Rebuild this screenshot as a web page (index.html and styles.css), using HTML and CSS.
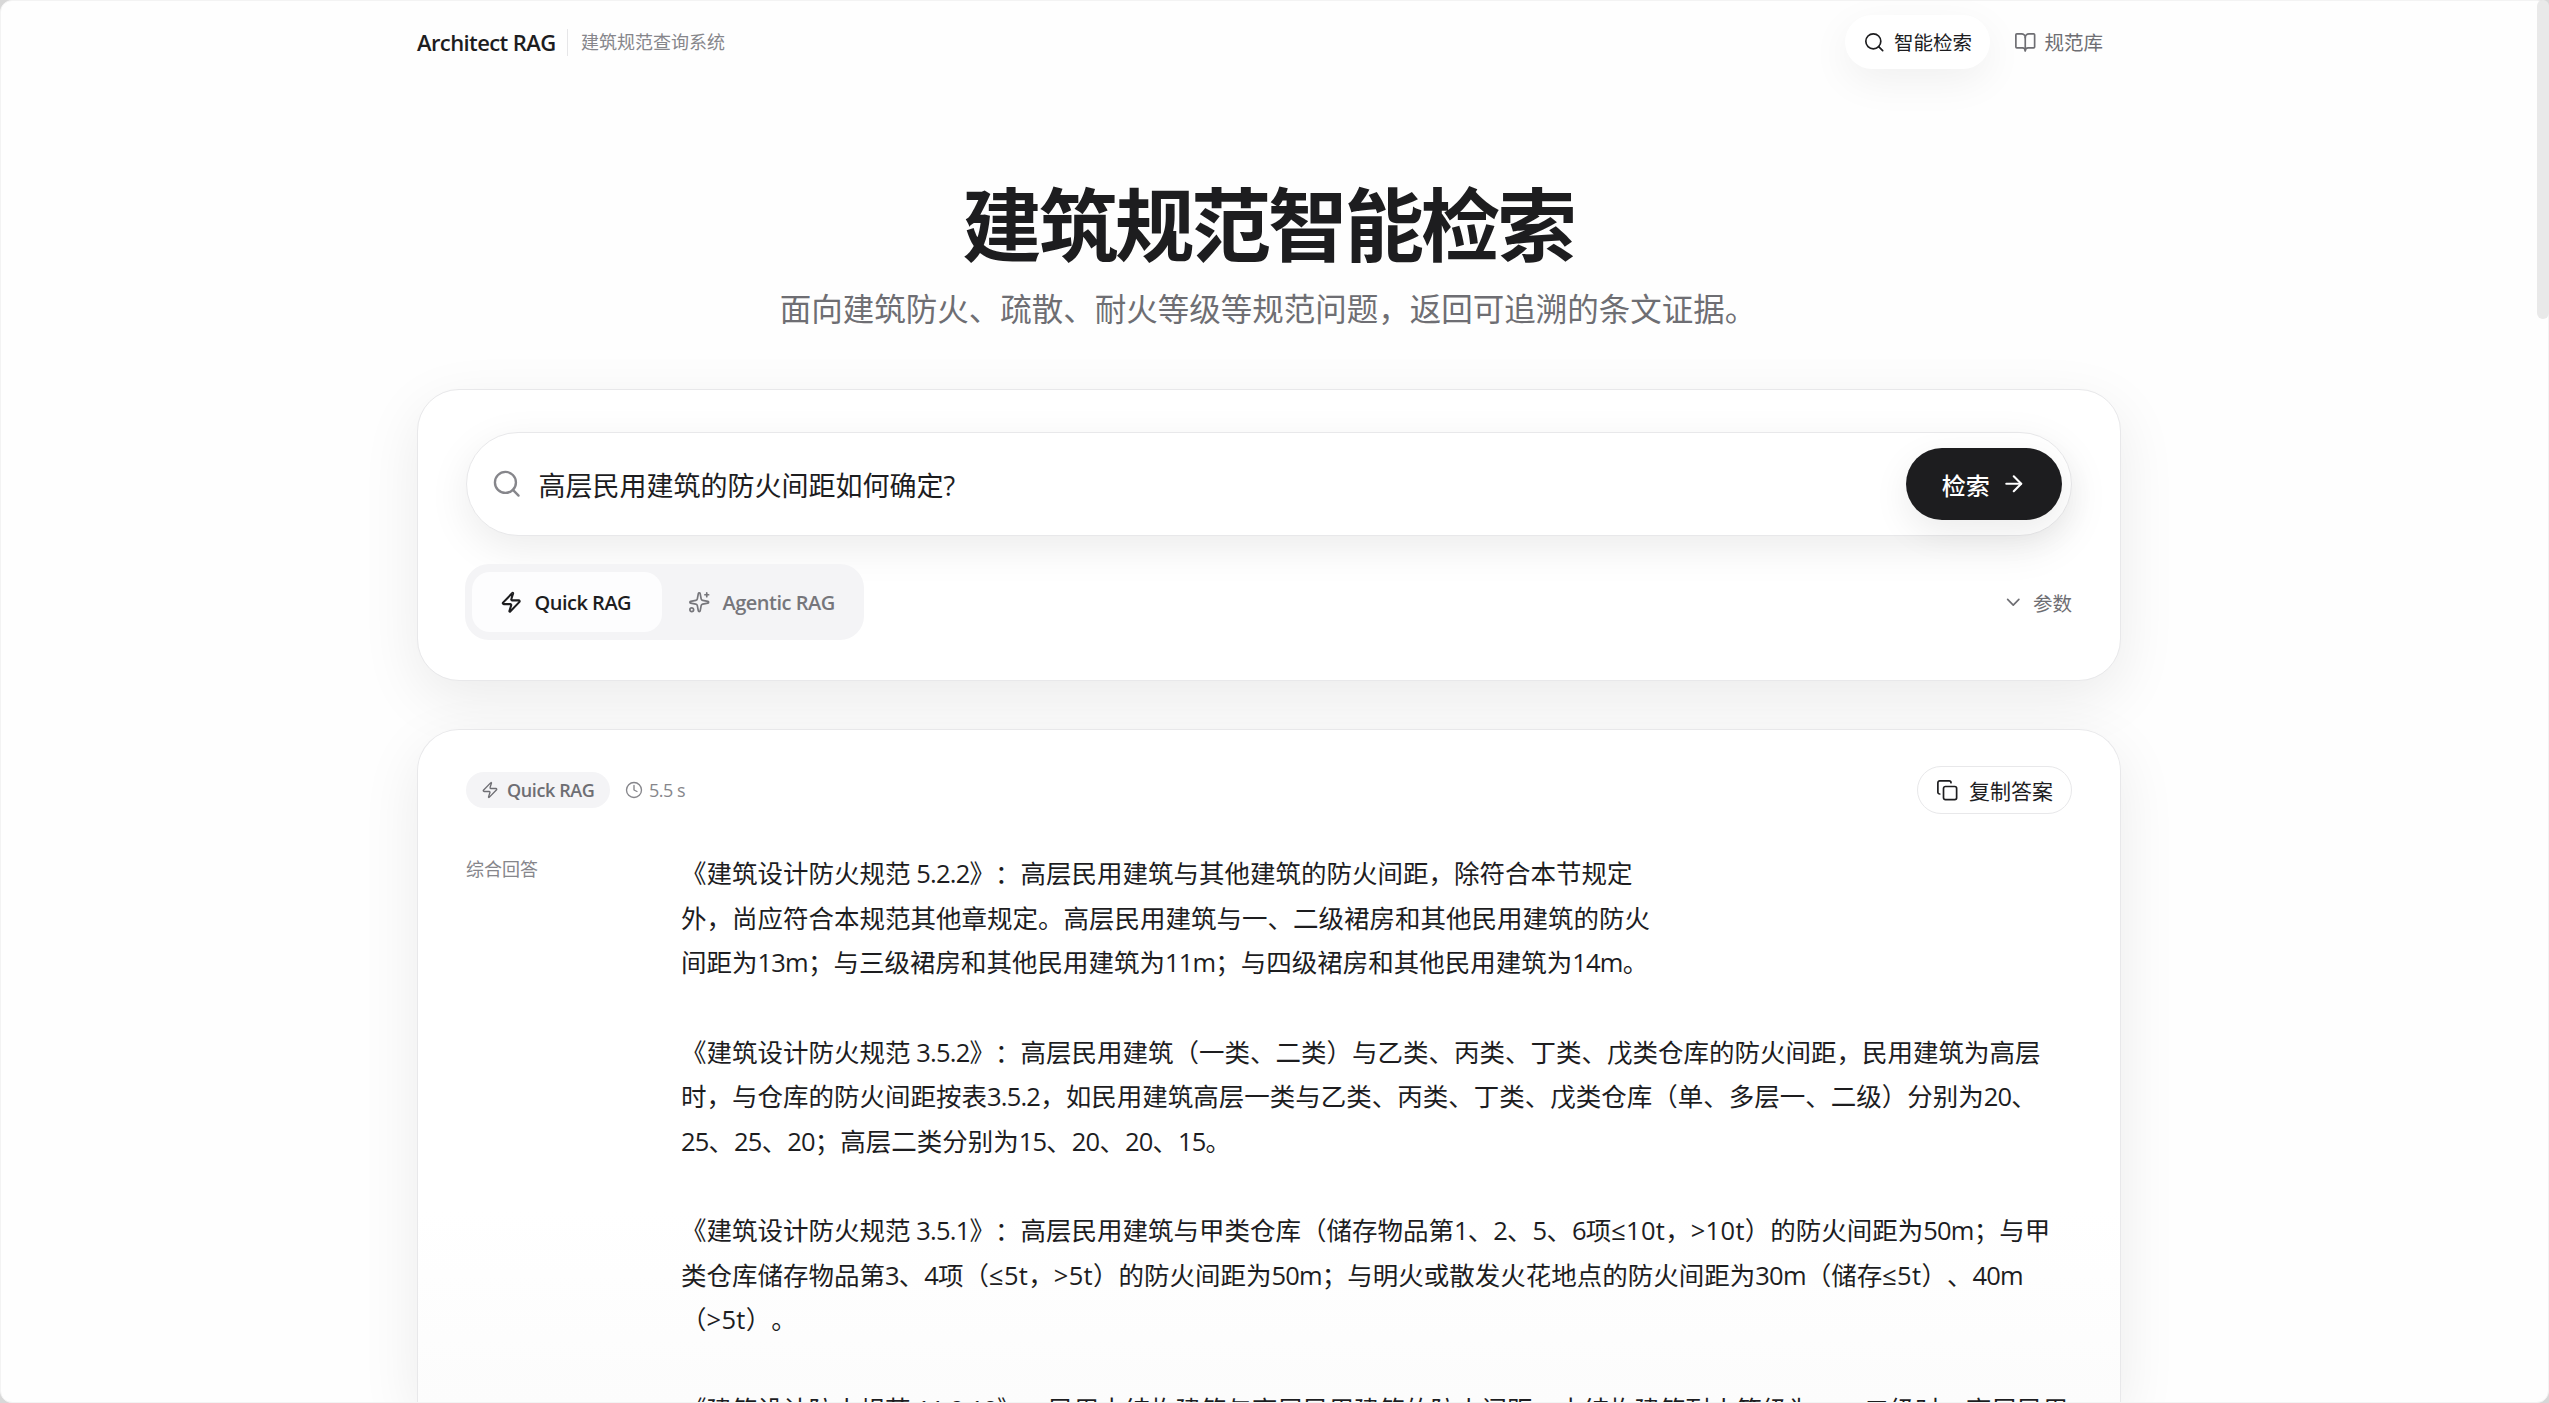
FILE: index.html
```html
<!DOCTYPE html>
<html lang="zh-CN">
<head>
    <meta charset="UTF-8">
    <title>Architect RAG</title>
    <link rel="stylesheet" href="styles.css">
</head>
<body>
    <div class="page">
        <header class="topbar">
            <div class="brand">
                <span class="brand-name">Architect RAG</span>
                <span class="brand-sub">建筑规范查询系统</span>
            </div>
            <nav class="nav">
                <a class="nav-item active">
                    <svg class="icon" viewBox="0 0 24 24"><circle cx="11" cy="11" r="8"/><path d="m21 21-4.3-4.3"/></svg>
                    <span>智能检索</span>
                </a>
                <a class="nav-item">
                    <svg class="icon" viewBox="0 0 24 24"><path d="M12 7v14"/><path d="M3 18a1 1 0 0 1-1-1V4a1 1 0 0 1 1-1h5a4 4 0 0 1 4 4 4 4 0 0 1 4-4h5a1 1 0 0 1 1 1v13a1 1 0 0 1-1 1h-6a3 3 0 0 0-3 3 3 3 0 0 0-3-3z"/></svg>
                    <span>规范库</span>
                </a>
            </nav>
        </header>

        <section class="hero">
            <h1>建筑规范智能检索</h1>
            <p>面向建筑防火、疏散、耐火等级等规范问题，返回可追溯的条文证据。</p>
        </section>

        <section class="card search-card">
            <div class="search-box">
                <svg class="icon search-icon" viewBox="0 0 24 24"><circle cx="11" cy="11" r="8"/><path d="m21 21-4.3-4.3"/></svg>
                <span class="query">高层民用建筑的防火间距如何确定?</span>
                <button class="submit">
                    检索
                    <svg class="icon" viewBox="0 0 24 24"><path d="M5 12h14"/><path d="m12 5 7 7-7 7"/></svg>
                </button>
            </div>
            <div class="options">
                <div class="modes">
                    <div class="mode active">
                        <svg class="icon" viewBox="0 0 24 24"><path d="M4 14a1 1 0 0 1-.78-1.63l9.9-10.2a.5.5 0 0 1 .86.46l-1.92 6.02A1 1 0 0 0 13 10h7a1 1 0 0 1 .78 1.63l-9.9 10.2a.5.5 0 0 1-.86-.46l1.92-6.02A1 1 0 0 0 11 14z"/></svg>
                        <span>Quick RAG</span>
                    </div>
                    <div class="mode">
                        <svg class="icon" viewBox="0 0 24 24"><path d="M11.017 2.814a1 1 0 0 1 1.966 0l1.051 5.558a2 2 0 0 0 1.594 1.594l5.558 1.051a1 1 0 0 1 0 1.966l-5.558 1.051a2 2 0 0 0-1.594 1.594l-1.051 5.558a1 1 0 0 1-1.966 0l-1.051-5.558a2 2 0 0 0-1.594-1.594l-5.558-1.051a1 1 0 0 1 0-1.966l5.558-1.051a2 2 0 0 0 1.594-1.594z"/><path d="M20 2v4"/><path d="M22 4h-4"/><circle cx="4" cy="20" r="2"/></svg>
                        <span>Agentic RAG</span>
                    </div>
                </div>
                <div class="params">
                    <svg class="icon" viewBox="0 0 24 24"><path d="m6 9 6 6 6-6"/></svg>
                    参数
                </div>
            </div>
        </section>

        <section class="card answer-card">
            <div class="answer-head">
                <div class="meta">
                    <span class="badge">
                        <svg class="icon" viewBox="0 0 24 24"><path d="M4 14a1 1 0 0 1-.78-1.63l9.9-10.2a.5.5 0 0 1 .86.46l-1.92 6.02A1 1 0 0 0 13 10h7a1 1 0 0 1 .78 1.63l-9.9 10.2a.5.5 0 0 1-.86-.46l1.92-6.02A1 1 0 0 0 11 14z"/></svg>
                        <span>Quick RAG</span>
                    </span>
                    <span class="time">
                        <svg class="icon" viewBox="0 0 24 24"><circle cx="12" cy="12" r="10"/><path d="M12 6v6l4 2"/></svg>
                        5.5 s
                    </span>
                </div>
                <button class="copy">
                    <svg class="icon" viewBox="0 0 24 24"><rect x="8" y="8" width="14" height="14" rx="2"/><path d="M4 16c-1.1 0-2-.9-2-2V4c0-1.1.9-2 2-2h10c1.1 0 2 .9 2 2"/></svg>
                    <span>复制答案</span>
                </button>
            </div>
            <div class="answer-body">
                <div class="answer-label">综合回答</div>
                <div class="answer-text">
                    <p>《建筑设计防火规范<i> 5.2.2</i>》：高层民用建筑与其他建筑的防火间距，除符合本节规定<br>外，尚应符合本规范其他章规定。高层民用建筑与一、二级裙房和其他民用建筑的防火<br>间距为<i>13m</i>；与三级裙房和其他民用建筑为<i>11m</i>；与四级裙房和其他民用建筑为<i>14m</i>。</p>
                    <p>《建筑设计防火规范<i> 3.5.2</i>》：高层民用建筑（一类、二类）与乙类、丙类、丁类、戊类仓库的防火间距，民用建筑为高层<br>时，与仓库的防火间距按表<i>3.5.2</i>，如民用建筑高层一类与乙类、丙类、丁类、戊类仓库（单、多层一、二级）分别为<i>20</i>、<br><i>25</i>、<i>25</i>、<i>20</i>；高层二类分别为<i>15</i>、<i>20</i>、<i>20</i>、<i>15</i>。</p>
                    <p>《建筑设计防火规范<i> 3.5.1</i>》：高层民用建筑与甲类仓库（储存物品第<i>1</i>、<i>2</i>、<i>5</i>、<i>6</i>项<i class="cmp">≤10t</i>，<i class="cmp">&gt;10t</i>）的防火间距为<i>50m</i>；与甲<br>类仓库储存物品第<i>3</i>、<i>4</i>项（<i class="cmp">≤5t</i>，<i class="cmp">&gt;5t</i>）的防火间距为<i>50m</i>；与明火或散发火花地点的防火间距为<i>30m</i>（储存<i class="cmp">≤5t</i>）、<i>40m</i><br>（<i class="cmp">&gt;5t</i>）。</p>
                    <p>《建筑设计防火规范<i> 11.0.10</i>》：民用木结构建筑与高层民用建筑的防火间距，木结构建筑耐火等级为一、二级时，高层民用</p>
                </div>
            </div>
        </section>
    </div>
    <div class="scrollbar"></div>
</body>
</html>
```

FILE: styles.css
```css
* {
    box-sizing: border-box;
}

html {
    background: #d8d8d8;
}

body {
    margin: 0;
    height: 1403px;
    overflow: hidden;
    border: 1px solid #f3f3f3;
    border-radius: 12px;
    background: #fefefe;
    color: #1d1d1f;
    font-family: "Open Sans", "Noto Sans CJK SC", sans-serif;
    text-spacing-trim: space-all;
}

h1, p {
    margin: 0;
}

button {
    font-family: inherit;
    border: none;
}

.icon {
    flex: none;
    width: 22.5px;
    height: 22.5px;
    fill: none;
    stroke: currentColor;
    stroke-width: 1.8;
    stroke-linecap: round;
    stroke-linejoin: round;
}

.page {
    width: 1704px;
    height: 1401px;
    margin-left: 416px;
}

/* top bar */
.topbar {
    display: flex;
    justify-content: space-between;
    align-items: center;
    height: 82px;
}

.brand {
    display: flex;
    align-items: center;
}

.brand-name {
    width: 150px;
    font-size: 22px;
    line-height: 28px;
    font-weight: 600;
    letter-spacing: -0.6px;
    white-space: nowrap;
}

.brand-sub {
    height: 27px;
    padding-left: 13px;
    border-left: 1px solid #e6e6e8;
    font-size: 18px;
    line-height: 27px;
    color: #86868b;
}

.nav {
    display: flex;
    gap: 6px;
}

.nav-item {
    display: flex;
    align-items: center;
    gap: 8px;
    height: 54px;
    padding: 0 18px;
    border-radius: 27px;
    font-size: 19.5px;
    color: #6e6e73;
}

.nav-item span {
    padding-bottom: 2px;
}

.nav-item.active {
    background: #fff;
    color: #1d1d1f;
    box-shadow: 0 12px 42px rgba(0, 0, 0, 0.06);
}

/* hero */
.hero {
    height: 306px;
    padding-top: 98px;
    text-align: center;
}

.hero h1 {
    margin-right: 2px;
    font-size: 79.5px;
    line-height: 86px;
    font-weight: 700;
    letter-spacing: -3.06px;
}

.hero p {
    margin-top: 19px;
    margin-right: 2px;
    font-size: 31.5px;
    line-height: 46px;
    color: #6e6e73;
}

.card {
    border: 1px solid #e8e8ea;
    border-radius: 42px;
    background: #fff;
    box-shadow: 0 18px 60px rgba(0, 0, 0, 0.08);
}

/* search */
.search-card {
    height: 292px;
    padding: 42px 48px;
}

.search-box {
    display: flex;
    align-items: center;
    height: 104px;
    padding: 0 9px 0 24px;
    border: 1px solid #e8e8ea;
    border-radius: 52px;
    background: #fff;
    box-shadow: 0 12px 42px rgba(0, 0, 0, 0.08);
}

.search-icon {
    width: 31.5px;
    height: 31.5px;
    color: #86868b;
}

.query {
    flex: 1;
    margin-left: 16px;
    font-size: 27px;
}

.submit {
    display: flex;
    align-items: center;
    justify-content: center;
    gap: 11px;
    width: 156px;
    height: 72px;
    border-radius: 36px;
    background: #1d1d1f;
    color: #fff;
    font-size: 24px;
    font-weight: 500;
    box-shadow: 0 12px 36px rgba(0, 0, 0, 0.08);
}

.submit .icon {
    width: 25.5px;
    height: 25.5px;
    stroke-width: 2;
}

.options {
    display: flex;
    justify-content: space-between;
    align-items: center;
    margin-top: 28px;
}

.modes {
    display: flex;
    width: 399px;
    height: 76px;
    padding: 8px 7px;
    margin-left: -1px;
    border-radius: 24px;
    background: #f4f4f6;
}

.mode {
    display: flex;
    align-items: center;
    gap: 12px;
    height: 60px;
    padding-top: 1px;
    padding-left: 26px;
    border-radius: 18px;
    font-size: 20px;
    font-weight: 600;
    letter-spacing: -0.5px;
    color: #76767b;
    white-space: nowrap;
}

.mode.active {
    width: 190px;
    padding-top: 0;
    padding-left: 28px;
    background: #fdfdfe;
    color: #1d1d1f;
}

.mode.active .icon {
    stroke-width: 2.2;
}

.params {
    display: flex;
    align-items: center;
    gap: 8px;
    font-size: 19.5px;
    color: #6e6e73;
}

/* answer */
.answer-card {
    height: 673px;
    margin-top: 48px;
    padding: 36px 48px 0;
    border-bottom: none;
    border-radius: 42px 42px 0 0;
    background: linear-gradient(#fff 480px, #fcfcfc 673px);
}

.answer-head {
    display: flex;
    justify-content: space-between;
    height: 48px;
    align-items: center;
}

.meta {
    display: flex;
    gap: 15px;
    color: #6e6e73;
    font-size: 18px;
    letter-spacing: -0.5px;
}

.meta .icon {
    width: 18px;
    height: 18px;
}

.badge {
    display: flex;
    align-items: center;
    gap: 8px;
    width: 144px;
    height: 36px;
    padding-left: 15px;
    border-radius: 18px;
    background: #f4f4f6;
    font-weight: 600;
    letter-spacing: -0.4px;
    white-space: nowrap;
}

.time {
    display: flex;
    align-items: center;
    gap: 6px;
    color: #86868b;
}

.copy {
    display: flex;
    align-items: center;
    gap: 11px;
    height: 48px;
    padding: 0 18px;
    border: 1px solid #e8e8ea;
    border-radius: 24px;
    background: #fff;
    color: #1d1d1f;
    font-size: 21px;
}

.answer-body {
    display: flex;
    margin-top: 37px;
}

.answer-label {
    width: 215px;
    padding-top: 5px;
    font-size: 18px;
    line-height: 27px;
    color: #86868b;
}

.answer-text {
    font-size: 25.5px;
    line-height: 44.625px;
    white-space: nowrap;
}

.answer-text p {
    margin-bottom: 44.625px;
}

.answer-text p:last-child {
    margin-bottom: 0;
}

/* latin runs sit a little tighter than the chinese text */
.answer-text i {
    font-style: normal;
    letter-spacing: -0.8px;
}

.answer-text .cmp {
    letter-spacing: 0.3px;
}

.scrollbar {
    position: absolute;
    top: 0;
    right: 0;
    width: 12px;
    height: 319px;
    border-radius: 6px;
    background: #e9e9e9;
}
```
